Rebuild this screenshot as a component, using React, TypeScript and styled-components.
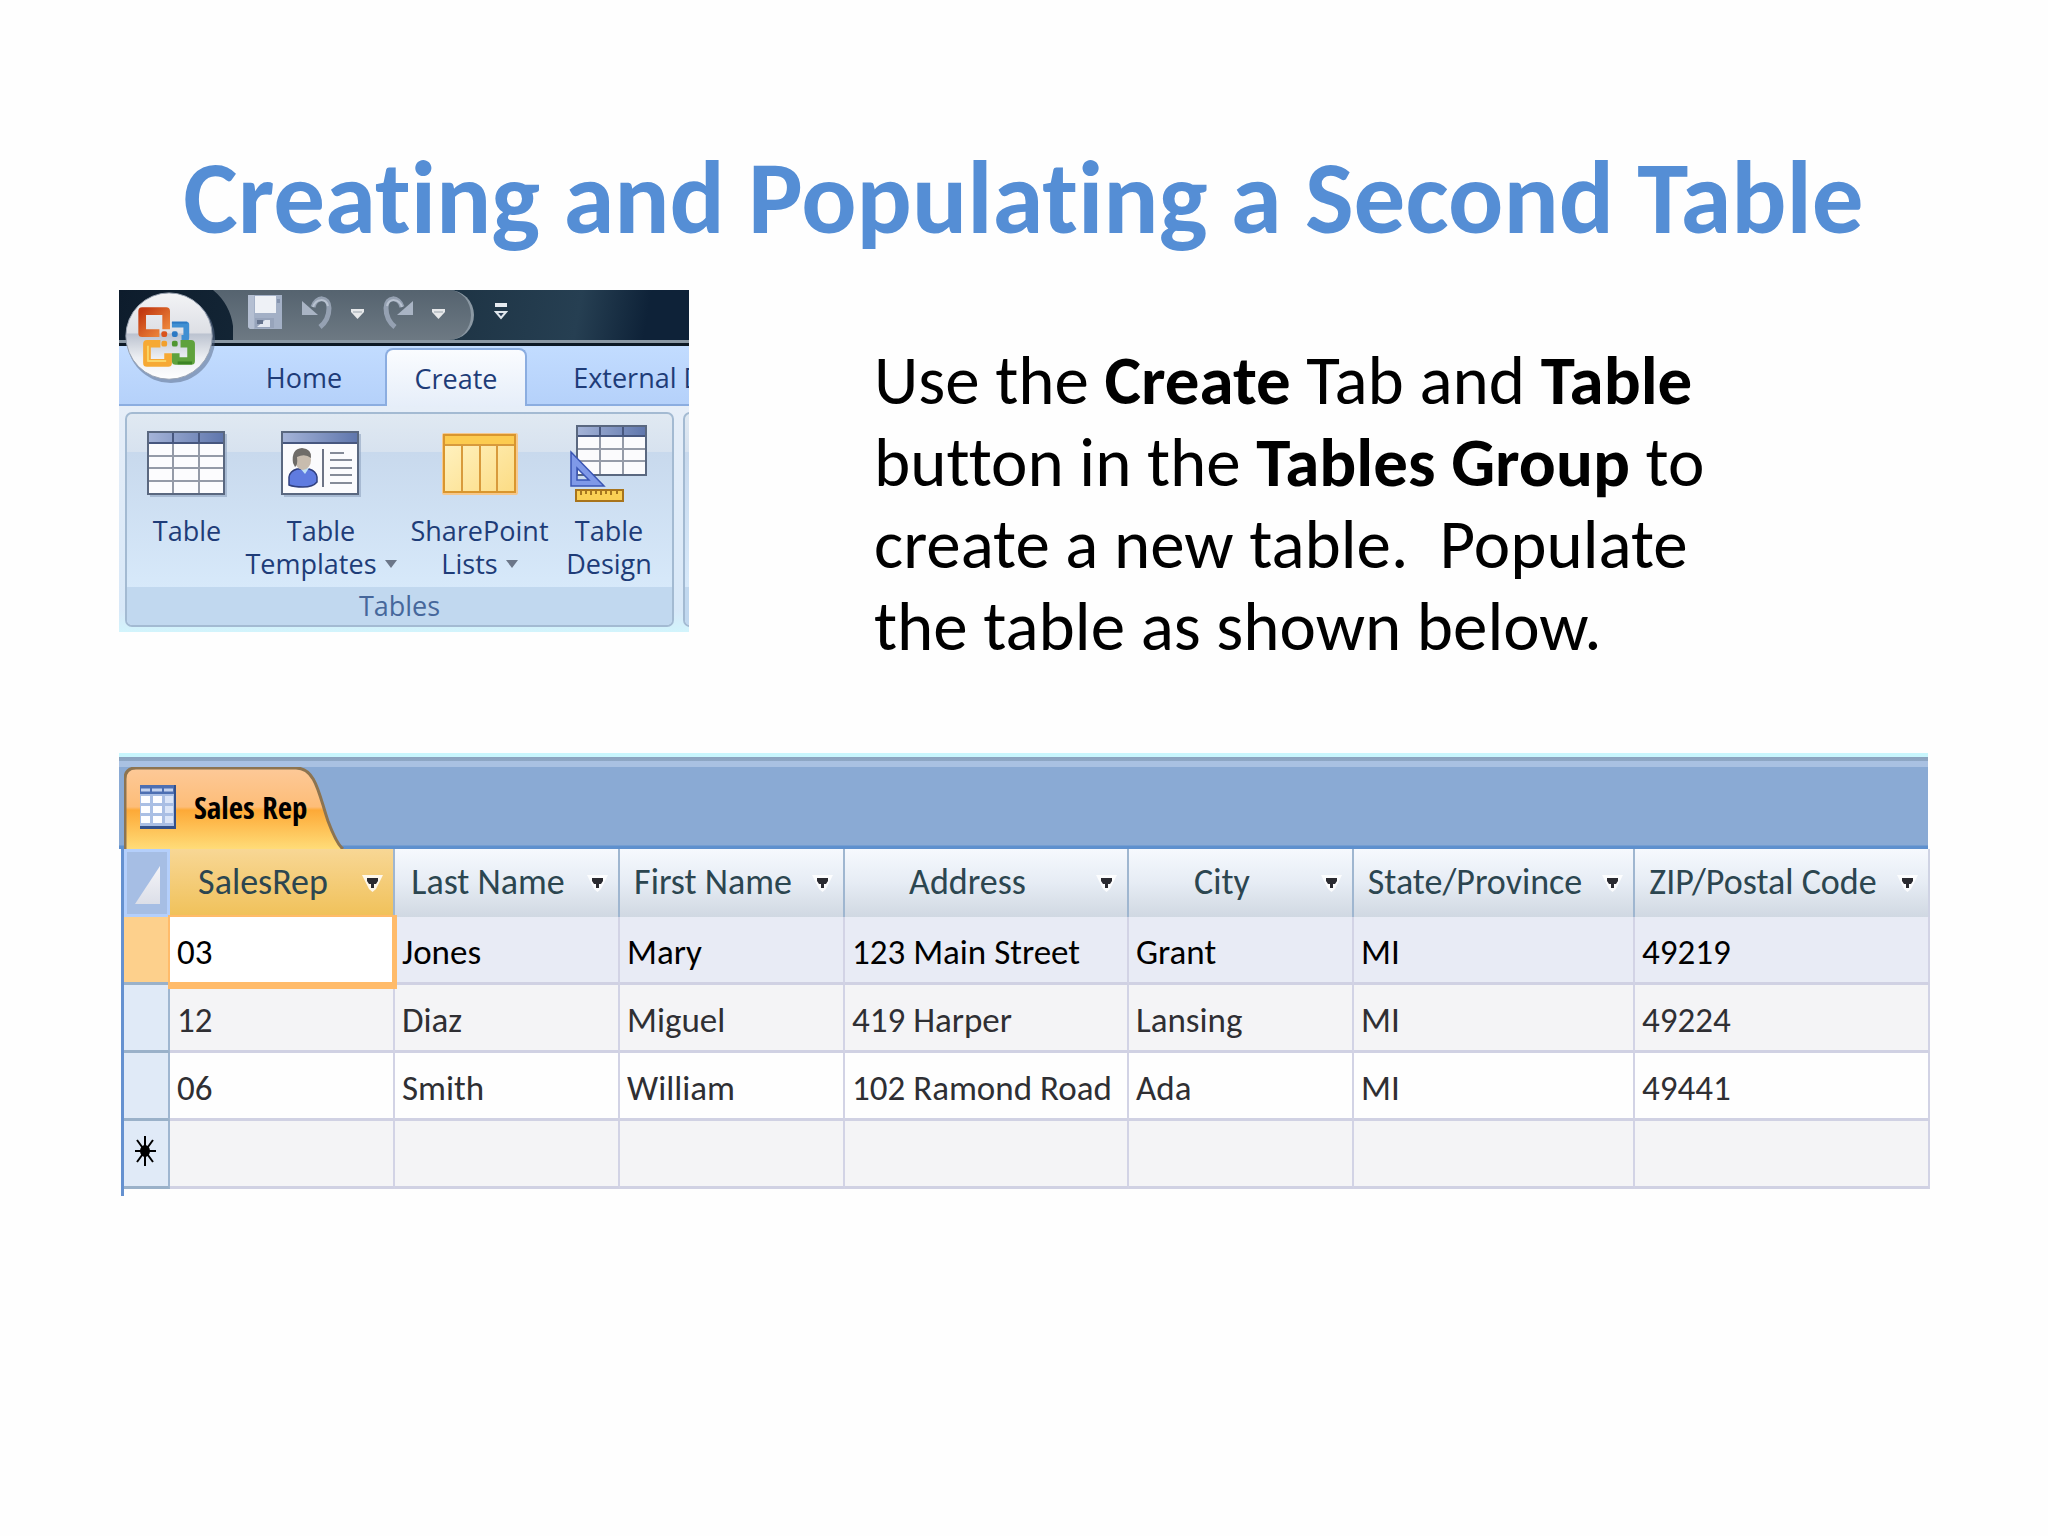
import React from "react";
import styled, { createGlobalStyle, css } from "styled-components";

const slideFont = `Calibri, Carlito, Lato, sans-serif`;
const uiFont = `"Open Sans", "Noto Sans", sans-serif`;

const GlobalStyle = createGlobalStyle`
  *, *::before, *::after { box-sizing: border-box; }
  body { margin: 0; background: #fefefe; }
  button { font: inherit; color: inherit; background: none; border: 0; margin: 0; padding: 0; }
`;

const Slide = styled.main`
  display: flex;
  flex-direction: column;
  padding: 135px 120px 135px 119px;
  font-family: ${slideFont};
  font-variant-ligatures: none;
  color: #000;
`;

const Title = styled.h1`
  margin: 0 0 29px;
  font-size: 103px;
  line-height: 126px;
  font-weight: 700;
  text-align: center;
  color: #558ed5;
`;

const Intro = styled.section`
  display: grid;
  grid-template-columns: 570px minmax(0, 860px);
  column-gap: 185px;
  align-items: start;
  margin-bottom: 85px;
`;

const Instructions = styled.p`
  margin: 0;
  padding-top: 50px;
  font-size: 69px;
  line-height: 82px;
  white-space: pre-wrap;
`;

/* ---------- Ribbon ---------- */

const Ribbon = styled.div`
  position: relative;
  overflow: hidden;
  height: 342px;
  font-family: ${uiFont};
  font-size: 27px;
  line-height: 33px;
  color: #1e3c78;
  background: #dbe7f5;
`;

const QuickAccess = styled.div`
  display: flex;
  height: 56px;
  padding-left: 80px;
  background: linear-gradient(100deg, #0d1c2c 0%, #1b3040 50%, #263f52 80%, #0e2238 92%);
  border-bottom: 3px solid #0c1824;
  box-shadow: inset 0 -3px 0 #8b98a4;
`;

const QuickPill = styled.div`
  display: flex;
  align-items: center;
  gap: 18px;
  width: 275px;
  height: 50px;
  padding: 0 0 6px 48px;
  border-right: 3px solid #8b98a3;
  border-radius: 0 26px 26px 0;
  background: linear-gradient(#55636f, #6d7983);
  clip-path: path("M14 0 H275 V50 H34 V36 Q31 14 14 0 Z");
`;

const QuickButton = styled.button`
  display: flex;
`;

const QuickMore = styled.button`
  display: flex;
  align-items: center;
  padding: 0 0 10px 20px;
`;

const OfficeButton = styled.button`
  position: absolute;
  left: 4px;
  top: 0;
  display: flex;
`;

const TabRow = styled.div`
  display: flex;
  align-items: flex-end;
  height: 60px;
  padding-left: 104px;
  background: linear-gradient(#c2dcff, #b5d1fa);
  border-bottom: 2px solid #8bade0;
`;

const RibbonTab = styled.button<{ $active?: boolean; $wide?: boolean }>`
  flex: none;
  width: ${(p) => (p.$wide ? 262 : 162)}px;
  height: 56px;
  padding-top: 3px;
  white-space: nowrap;
  ${(p) =>
    p.$active &&
    css`
      width: 142px;
      height: 58px;
      margin-bottom: -2px;
      padding-top: 0;
      border: 2px solid #8bade0;
      border-bottom: 0;
      border-radius: 8px 8px 0 0;
      background: linear-gradient(#fafcff, #e6eef9);
    `}
`;

const RibbonBody = styled.div`
  display: flex;
  gap: 9px;
  height: 226px;
  padding: 6px 0 5px 6px;
  background: linear-gradient(#e6eef8, #d8e8f8 90%, #d2f4fc);
`;

const Group = styled.section`
  flex: none;
  display: flex;
  flex-direction: column;
  width: 549px;
  border: 2px solid #a3bad2;
  border-radius: 7px;
  background: linear-gradient(#e0e9f2 0, #d7e2ef 38px, #c8d9ed 38px, #d7e9fa 174px);
  overflow: hidden;
`;

const GroupButtons = styled.div`
  display: grid;
  grid-template-columns: 106px 162px 155px 104px;
  height: 173px;
  padding: 10px 0 0 7px;
`;

const Command = styled.button`
  display: flex;
  flex-direction: column;
  align-items: center;
  justify-content: flex-start;
`;

const IconSlot = styled.span`
  display: flex;
  align-items: center;
  height: 80px;
  margin-bottom: 10px;
`;

const CommandLabel = styled.span`
  display: flex;
  align-items: center;
  gap: 8px;
  white-space: nowrap;
`;

const GroupCaption = styled.h2`
  flex: 1;
  margin: 0;
  font-size: 27px;
  line-height: 38px;
  font-weight: 400;
  text-align: center;
  color: #46679b;
  background: #c1d8ef;
`;

/* ---------- Datasheet ---------- */

const Datasheet = styled.section`
  border-top: 4px solid #c8f6fd;
`;

const DocumentBar = styled.div`
  display: flex;
  height: 92px;
  padding: 10px 0 0 5px;
  background: linear-gradient(#8ba3be 0, #8ea7c5 4px, #a9c1e2 4px, #a9c1e2 10px, #8aaad4 10px, #8aaad4 88px, #5e90ce 89px);
`;

const DocumentTab = styled.button`
  position: relative;
  display: flex;
  align-items: center;
  gap: 18px;
  width: 224px;
  height: 82px;
  padding: 0 0 3px 16px;
  font-family: "Open Sans Condensed", ${slideFont};
  font-size: 31px;
  line-height: 36px;
  font-weight: 700;
  color: #000;
  white-space: nowrap;
`;

const TabShape = styled.svg`
  position: absolute;
  inset: 0;
  z-index: 0;
`;

const TabFace = styled.span`
  position: relative;
  display: flex;
`;

const GridFrame = styled.div`
  padding-left: 2px;
`;

const Grid = styled.table`
  width: 100%;
  table-layout: fixed;
  border-collapse: separate;
  border-spacing: 0;
  border-left: 3px solid #6591d0;
  font-size: 35px;
  line-height: 42px;
`;

const HeadCell = styled.th<{ $selected?: boolean }>`
  height: 68px;
  padding: 0;
  border-right: 2px solid #9fb6d0;
  font-size: 36px;
  font-weight: 400;
  color: #2c4650;
  background: ${(p) =>
    p.$selected ? "linear-gradient(#f8d795, #f0c159)" : "linear-gradient(#f6f9fe, #e6ecf4 50%, #d0d8e2)"};
  &:last-child { border-right-color: #cfd3e4; }
`;

const HeadInner = styled.div`
  display: flex;
  align-items: center;
  gap: 6px;
  padding: 0 10px 3px 0;
  white-space: nowrap;
`;

const HeadText = styled.span`
  flex: 1;
  text-align: center;
`;

const FilterButton = styled.button`
  display: flex;
  padding-top: 5px;
`;

const SelectAll = styled.th`
  height: 68px;
  padding: 0;
  border: 3px solid #b4cffb;
  background: #a6bee4;
`;

const SelectAllButton = styled.button`
  display: flex;
  padding: 4px 0 0 8px;
`;

const Selector = styled.th<{ $current?: boolean }>`
  height: 68px;
  padding: 3px 0 0 8px;
  text-align: left;
  border-right: 2px solid #9fb6d0;
  border-bottom: 3px solid #9ab1c9;
  background: ${(p) => (p.$current ? "#fdd08c" : "#e0eaf7")};
`;

const rowTint = { current: "#e8ebf5", odd: "#f4f4f6", even: "#fefefe" };

const Cell = styled.td<{ $tint: keyof typeof rowTint; $selected?: boolean }>`
  height: 68px;
  padding: 4px 0 0 7px;
  border-right: 2px solid #d2d3e5;
  border-bottom: 3px solid #d0d1e3;
  white-space: nowrap;
  color: ${(p) => (p.$tint === "current" ? "#000" : "#2f2f33")};
  background: ${(p) => rowTint[p.$tint]};
  ${(p) =>
    p.$selected &&
    css`
      position: relative;
      background: #fff;
      &::after {
        content: "";
        position: absolute;
        inset: -2px -4px -7px -2px;
        border: solid #ffbb6a;
        border-width: 2px 5px 7px 2px;
      }
    `}
`;

const TailSpace = styled.div`
  height: 7px;
  border-left: 3px solid #6591d0;
`;

/* ---------- Drawings ---------- */

const OfficeOrb = () => (
  <svg width="94" height="94" viewBox="0 0 98 98" aria-hidden="true">
    <defs>
      <linearGradient id="orb" x1="0" y1="0" x2="0" y2="1">
        <stop offset="0" stopColor="#f3f4f6" />
        <stop offset="0.46" stopColor="#dddfe5" />
        <stop offset="0.48" stopColor="#bcc3d0" />
        <stop offset="0.75" stopColor="#eceef2" />
        <stop offset="1" stopColor="#ffffff" />
      </linearGradient>
      <linearGradient id="red" x1="0" y1="0" x2="1" y2="1">
        <stop offset="0" stopColor="#c23a12" />
        <stop offset="1" stopColor="#f08a3c" />
      </linearGradient>
    </defs>
    <circle cx="50" cy="51" r="46" fill="#5d6f8c" opacity="0.55" />
    <circle cx="48" cy="48" r="45" fill="url(#orb)" stroke="#9aa3b2" strokeWidth="1" />
    <g fill="none" strokeLinejoin="round">
      <path d="M38 45 H20 V22 H45 V41" stroke="url(#red)" strokeWidth="8" />
      <path d="M51 36 H66 V50 H61" stroke="#3f8fd2" strokeWidth="6" />
      <path d="M51 34 H67" stroke="#2b79c4" strokeWidth="2" />
      <path d="M39 56 H25 V76 H47 V66" stroke="#f6a934" strokeWidth="8" />
      <path d="M60 56 H71 V74 H55 V66" stroke="#5fa23c" strokeWidth="8" />
      <path d="M26 58 V74 H45" stroke="#fbd566" strokeWidth="2" />
      <path d="M57 76 H72" stroke="#3c8424" strokeWidth="3" />
    </g>
    <g>
      <rect x="40" y="43" width="6" height="6" rx="2" fill="#d9541e" />
      <rect x="51" y="43" width="6" height="6" rx="2" fill="#2b79c4" />
      <rect x="40" y="53" width="6" height="6" rx="2" fill="#f2a02c" />
      <rect x="51" y="53" width="6" height="6" rx="2" fill="#4f9632" />
    </g>
  </svg>
);

const SaveIcon = () => (
  <svg width="36" height="36" viewBox="0 0 36 36" aria-hidden="true">
    <path d="M1 1 H35 V35 H3 L1 33 Z" fill="#a3b0c6" />
    <path d="M1 1 H7 V35 H3 L1 33 Z" fill="#b4bfd2" />
    <rect x="8" y="2" width="21" height="17" fill="#eef1f6" />
    <rect x="30" y="5" width="3" height="4" fill="#8593ad" />
    <rect x="8" y="24" width="19" height="10" fill="#97a4bb" />
    <path d="M10 33 L18 26 H23 V33 H10 Z" fill="#e3e8f1" />
    <rect x="10" y="26" width="6" height="4" fill="#66748e" />
  </svg>
);

const UndoIcon = ({ flip }: { flip?: boolean }) => (
  <svg width="32" height="34" viewBox="0 0 32 34" aria-hidden="true">
    <g transform={flip ? "translate(32 0) scale(-1 1)" : undefined}>
      <path d="M12 12 C15 1 28 1 28 13 C28 22 24 28 19 32" fill="none" stroke="#95a1b2" strokeWidth="5" />
      <path d="M1 6 V20 H17 Z" fill="#a9b4c4" />
      <path d="M12 12 C15 3 25 3 27 11" fill="none" stroke="#b8c2d0" strokeWidth="2" />
    </g>
  </svg>
);

const SmallArrow = () => (
  <svg width="13" height="13" viewBox="0 0 13 13" aria-hidden="true">
    <path d="M0 3 H13 V6 L6.5 13 L0 6 Z" fill="#e6e8ea" />
    <path d="M2 6 H11" stroke="#9aa4ac" strokeWidth="1" />
  </svg>
);

const MoreIcon = () => (
  <svg width="14" height="17" viewBox="0 0 14 17" aria-hidden="true">
    <rect x="1" y="0" width="12" height="4" fill="#e6ebf0" />
    <path d="M2 9 H12 L7 15 Z" fill="#2b4058" stroke="#dfe6ec" strokeWidth="2" />
  </svg>
);

const LabelArrow = () => (
  <svg width="12" height="8" viewBox="0 0 12 8" aria-hidden="true">
    <path d="M0 0 H12 L6 8 Z" fill="#6b7688" />
  </svg>
);

const IconDefs = () => (
  <defs>
    <linearGradient id="bluebar" x1="0" y1="0" x2="1" y2="0">
      <stop offset="0" stopColor="#a5b4d8" />
      <stop offset="1" stopColor="#5f76ac" />
    </linearGradient>
  </defs>
);

const TableIcon = () => (
  <svg width="80" height="66" viewBox="0 0 80 66" aria-hidden="true">
    <IconDefs />
    <rect x="3" y="3" width="77" height="63" fill="#8fa3c0" opacity="0.6" />
    <rect x="1" y="1" width="76" height="62" fill="#fcfcfe" />
    <rect x="1" y="1" width="76" height="12" fill="url(#bluebar)" />
    <path d="M1 25 H77 M1 37 H77 M1 50 H77 M26 13 V62 M52 13 V62" stroke="#959ba8" strokeWidth="2" />
    <path d="M1 12 H77 M26 1 V12 M52 1 V12" stroke="#47577f" strokeWidth="2" />
    <rect x="1" y="1" width="76" height="62" fill="none" stroke="#5a6880" strokeWidth="2" />
  </svg>
);

const TemplateIcon = () => (
  <svg width="80" height="66" viewBox="0 0 80 66" aria-hidden="true">
    <rect x="3" y="3" width="77" height="63" fill="#8fa3c0" opacity="0.6" />
    <rect x="1" y="1" width="76" height="62" fill="#fbfbfd" />
    <rect x="1" y="1" width="76" height="12" fill="url(#bluebar)" />
    <path d="M1 12 H77" stroke="#47577f" strokeWidth="2" />
    <rect x="1" y="1" width="76" height="62" fill="none" stroke="#5a6880" strokeWidth="2" />
    <path d="M8 54 V46 Q9 40 16 38 H28 Q35 40 36 46 V51 Q32 56 22 56 Q13 56 8 54 Z" fill="#5f7be0" stroke="#31407f" strokeWidth="1.5" />
    <path d="M19 37 H28 L24 43 Z" fill="#bfe0f5" />
    <ellipse cx="22" cy="29" rx="8" ry="10" fill="#c8bcae" />
    <path d="M12 32 Q10 18 21 17 Q31 18 30 27 Q24 22 16 26 Q17 34 14 36 Z" fill="#6f6c68" />
    <path d="M42 18 V56" stroke="#6d7486" strokeWidth="2" />
    <path d="M49 22 H63 M49 29 H71 M49 37 H71 M49 44 H71 M49 52 H71" stroke="#858b98" strokeWidth="2" />
  </svg>
);

const SharePointIcon = () => (
  <svg width="76" height="62" viewBox="0 0 76 62" aria-hidden="true">
    <defs>
      <linearGradient id="gold" x1="0" y1="0" x2="1" y2="1">
        <stop offset="0" stopColor="#fff3c4" />
        <stop offset="1" stopColor="#fcdc84" />
      </linearGradient>
    </defs>
    <rect x="0" y="0" width="76" height="62" rx="2" fill="#f6c88c" />
    <rect x="2" y="2" width="71" height="57" fill="url(#gold)" />
    <rect x="2" y="2" width="71" height="10" fill="#fccb50" />
    <path d="M2 12 H73 M20 12 V58 M38 12 V58 M55 12 V58" stroke="#d89a3c" strokeWidth="2" />
    <rect x="2" y="2" width="71" height="57" fill="none" stroke="#d9962e" strokeWidth="2" />
  </svg>
);

const DesignIcon = () => (
  <svg width="78" height="78" viewBox="0 0 78 78" aria-hidden="true">
    <rect x="7" y="1" width="69" height="49" fill="#fbfbfd" />
    <rect x="7" y="1" width="69" height="10" fill="url(#bluebar)" />
    <path d="M7 24 H76 M7 36 H76 M30 11 V50 M53 11 V50" stroke="#959ba8" strokeWidth="2" />
    <path d="M7 11 H76 M30 1 V11 M53 1 V11" stroke="#47577f" strokeWidth="2" />
    <rect x="7" y="1" width="69" height="49" fill="none" stroke="#5a6880" strokeWidth="2" />
    <path d="M1 27 L34 61 H1 Z M7 43 V55 H19 Z" fill="#7f99e8" fillRule="evenodd" stroke="#3a55b4" strokeWidth="1.5" />
    <rect x="6" y="65" width="47" height="11" fill="#fbd055" stroke="#a8741c" strokeWidth="2" />
    <path d="M11 66 V70 M16 66 V69 M21 66 V70 M26 66 V69 M31 66 V70 M36 66 V69 M41 66 V70 M47 66 V69" stroke="#8a5a10" strokeWidth="1.5" />
  </svg>
);

const SheetIcon = () => (
  <svg width="36" height="44" viewBox="0 0 36 44" aria-hidden="true">
    <rect width="36" height="44" fill="#33518c" />
    <rect width="34" height="41" fill="#a9bee4" />
    <rect width="34" height="9" fill="#4d6fb2" />
    <path d="M1 5 H10 M12 5 H22 M24 5 H33" stroke="#c3d2ee" strokeWidth="3" />
    <g fill="#fdfdff">
      <rect x="1" y="11" width="9" height="7" />
      <rect x="13" y="11" width="9" height="7" />
      <rect x="1" y="21" width="9" height="7" />
      <rect x="13" y="21" width="9" height="7" />
      <rect x="1" y="31" width="9" height="7" />
      <rect x="13" y="31" width="9" height="7" />
    </g>
    <g fill="#dbe5f8">
      <rect x="25" y="11" width="8" height="7" />
      <rect x="25" y="21" width="8" height="7" />
      <rect x="25" y="31" width="8" height="7" />
    </g>
  </svg>
);

const HeadArrow = () => (
  <svg width="21" height="18" viewBox="0 0 21 18" aria-hidden="true">
    <path d="M0 0 H21 L14 14 L10.5 17 L7 14 Z" fill="#fff" opacity="0.85" />
    <path d="M5 3 H16 V6 L14 9 H12 V13 H9 V9 H7 L5 6 Z" fill="#2a2a30" />
  </svg>
);

const Corner = () => (
  <svg width="26" height="40" viewBox="0 0 26 40" aria-hidden="true">
    <defs>
      <linearGradient id="corner" x1="0" y1="0" x2="0" y2="1">
        <stop offset="0" stopColor="#f4f4f8" />
        <stop offset="1" stopColor="#dcdfe8" />
      </linearGradient>
    </defs>
    <path d="M25 1 V39 H0 Z" fill="url(#corner)" />
  </svg>
);

const NewRowMark = () => (
  <svg width="26" height="32" viewBox="0 0 26 32" aria-hidden="true">
    <path d="M13 1 V31 M3 16 H24 M5 5 L21 27 M21 5 L5 27" stroke="#000" strokeWidth="2" />
    <ellipse cx="13" cy="16" rx="5" ry="6" />
  </svg>
);

/* ---------- Data ---------- */

type CommandSpec = { lines: string[]; menu?: boolean; icon: React.ReactNode };

const commands: CommandSpec[] = [
  { lines: ["Table"], icon: <TableIcon /> },
  { lines: ["Table", "Templates"], menu: true, icon: <TemplateIcon /> },
  { lines: ["SharePoint", "Lists"], menu: true, icon: <SharePointIcon /> },
  { lines: ["Table", "Design"], icon: <DesignIcon /> },
];

const columns = [
  { name: "SalesRep", width: 225 },
  { name: "Last Name", width: 225 },
  { name: "First Name", width: 225 },
  { name: "Address", width: 284 },
  { name: "City", width: 225 },
  { name: "State/Province", width: 281 },
  { name: "ZIP/Postal Code", width: 295 },
];

const records = [
  ["03", "Jones", "Mary", "123 Main Street", "Grant", "MI", "49219"],
  ["12", "Diaz", "Miguel", "419 Harper", "Lansing", "MI", "49224"],
  ["06", "Smith", "William", "102 Ramond Road", "Ada", "MI", "49441"],
];

const tintOf = (row: number) => (row === 0 ? "current" : row % 2 ? "odd" : "even");

const Col = styled.col<{ $width: number }>`
  width: ${(p) => p.$width}px;
`;

export default function App() {
  return (
    <>
      <GlobalStyle />
      <Slide>
        <Title>Creating and Populating a Second Table</Title>
        <Intro>
          <Ribbon>
            <QuickAccess>
              <QuickPill>
                <QuickButton aria-label="Save"><SaveIcon /></QuickButton>
                <QuickButton aria-label="Undo"><UndoIcon /></QuickButton>
                <QuickButton aria-label="Undo history"><SmallArrow /></QuickButton>
                <QuickButton aria-label="Redo"><UndoIcon flip /></QuickButton>
                <QuickButton aria-label="Redo history"><SmallArrow /></QuickButton>
              </QuickPill>
              <QuickMore aria-label="Customize toolbar"><MoreIcon /></QuickMore>
            </QuickAccess>
            <TabRow>
              <RibbonTab>Home</RibbonTab>
              <RibbonTab $active>Create</RibbonTab>
              <RibbonTab $wide>External Data</RibbonTab>
            </TabRow>
            <RibbonBody>
              <Group>
                <GroupButtons>
                  {commands.map((c) => (
                    <Command key={c.lines.join(" ")}>
                      <IconSlot>{c.icon}</IconSlot>
                      {c.lines.map((line, i) => (
                        <CommandLabel key={line}>
                          {line}
                          {c.menu && i === 1 && <LabelArrow />}
                        </CommandLabel>
                      ))}
                    </Command>
                  ))}
                </GroupButtons>
                <GroupCaption>Tables</GroupCaption>
              </Group>
              <Group aria-hidden="true">
                <GroupButtons />
                <GroupCaption />
              </Group>
            </RibbonBody>
            <OfficeButton aria-label="Office"><OfficeOrb /></OfficeButton>
          </Ribbon>
          <Instructions>
            Use the <b>Create</b> Tab and <b>Table</b> button in the <b>Tables Group</b> to create a new table.{"  "}Populate
            {" "}the table as shown below.
          </Instructions>
        </Intro>

        <Datasheet>
          <DocumentBar>
            <DocumentTab>
              <TabShape width="224" height="82" viewBox="0 0 224 82" aria-hidden="true">
                <defs>
                  <linearGradient id="tab" x1="0" y1="0" x2="0" y2="1">
                    <stop offset="0" stopColor="#fdc998" />
                    <stop offset="0.48" stopColor="#fdbd78" />
                    <stop offset="0.52" stopColor="#fda937" />
                    <stop offset="1" stopColor="#ffdc78" />
                  </linearGradient>
                </defs>
                <path d="M1 82 V12 Q1 1 12 1 H172 C192 1 195 28 204 54 C210 70 214 78 219 82 Z" fill="url(#tab)" />
                <path d="M1 82 V12 Q1 1 12 1 H172 C192 1 195 28 204 54 C210 70 214 78 219 82" fill="none" stroke="#8d7450" strokeWidth="3" />
              </TabShape>
              <TabFace><SheetIcon /></TabFace>
              <TabFace>Sales Rep</TabFace>
            </DocumentTab>
          </DocumentBar>
          <GridFrame>
            <Grid>
              <colgroup>
                <Col $width={46} />
                {columns.map((c) => <Col key={c.name} $width={c.width} />)}
              </colgroup>
              <thead>
                <tr>
                  <SelectAll>
                    <SelectAllButton aria-label="Select all"><Corner /></SelectAllButton>
                  </SelectAll>
                  {columns.map((c, i) => (
                    <HeadCell key={c.name} $selected={i === 0} scope="col">
                      <HeadInner>
                        <HeadText>{c.name}</HeadText>
                        <FilterButton aria-label={`Filter ${c.name}`}><HeadArrow /></FilterButton>
                      </HeadInner>
                    </HeadCell>
                  ))}
                </tr>
              </thead>
              <tbody>
                {records.map((r, row) => (
                  <tr key={r[0]}>
                    <Selector scope="row" $current={row === 0} />
                    {r.map((value, i) => (
                      <Cell key={columns[i].name} $tint={tintOf(row)} $selected={row === 0 && i === 0}>{value}</Cell>
                    ))}
                  </tr>
                ))}
                <tr>
                  <Selector scope="row"><NewRowMark /></Selector>
                  {columns.map((c) => <Cell key={c.name} $tint="odd" />)}
                </tr>
              </tbody>
            </Grid>
            <TailSpace />
          </GridFrame>
        </Datasheet>
      </Slide>
    </>
  );
}
